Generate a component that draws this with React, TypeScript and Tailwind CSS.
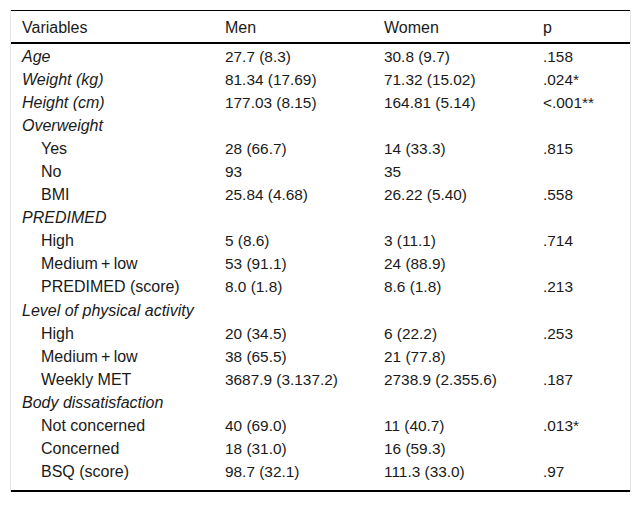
import React from 'react';

type Row = {
  label: string;
  men?: string;
  women?: string;
  p?: string;
  kind: 'var' | 'group' | 'sub';
};

const rows: Row[] = [
  { label: 'Age', men: '27.7 (8.3)', women: '30.8 (9.7)', p: '.158', kind: 'var' },
  { label: 'Weight (kg)', men: '81.34 (17.69)', women: '71.32 (15.02)', p: '.024*', kind: 'var' },
  { label: 'Height (cm)', men: '177.03 (8.15)', women: '164.81 (5.14)', p: '<.001**', kind: 'var' },
  { label: 'Overweight', kind: 'group' },
  { label: 'Yes', men: '28 (66.7)', women: '14 (33.3)', p: '.815', kind: 'sub' },
  { label: 'No', men: '93', women: '35', kind: 'sub' },
  { label: 'BMI', men: '25.84 (4.68)', women: '26.22 (5.40)', p: '.558', kind: 'sub' },
  { label: 'PREDIMED', kind: 'group' },
  { label: 'High', men: '5 (8.6)', women: '3 (11.1)', p: '.714', kind: 'sub' },
  { label: 'Medium\u2009+\u2009low', men: '53 (91.1)', women: '24 (88.9)', kind: 'sub' },
  { label: 'PREDIMED (score)', men: '8.0 (1.8)', women: '8.6 (1.8)', p: '.213', kind: 'sub' },
  { label: 'Level of physical activity', kind: 'group' },
  { label: 'High', men: '20 (34.5)', women: '6 (22.2)', p: '.253', kind: 'sub' },
  { label: 'Medium\u2009+\u2009low', men: '38 (65.5)', women: '21 (77.8)', kind: 'sub' },
  { label: 'Weekly MET', men: '3687.9 (3.137.2)', women: '2738.9 (2.355.6)', p: '.187', kind: 'sub' },
  { label: 'Body dissatisfaction', kind: 'group' },
  { label: 'Not concerned', men: '40 (69.0)', women: '11 (40.7)', p: '.013*', kind: 'sub' },
  { label: 'Concerned', men: '18 (31.0)', women: '16 (59.3)', kind: 'sub' },
  { label: 'BSQ (score)', men: '98.7 (32.1)', women: '111.3 (33.0)', p: '.97', kind: 'sub' },
];

const cols = 'grid grid-cols-[203px_159px_159px_1fr]';
const num = 'pl-[11px] whitespace-nowrap text-[15.4px]';

export default function App() {
  return (
    <div className="bg-white w-[641px] h-[505px] pt-[10px] px-[10px] font-['Liberation_Sans',Arial,sans-serif] text-[16px] text-[#1a1a1a]">
      <div className="border-x border-[#e6e6e6]">
        <div className="border-t border-black">
          <div className={`${cols} h-[33px] leading-[33px] border-b-2 border-black`}>
            <div className="pl-[11px]">Variables</div>
            <div className="pl-[11px]">Men</div>
            <div className="pl-[11px]">Women</div>
            <div className="pl-[11px]">p</div>
          </div>
          <div className="pt-[1px] pb-[7px] border-b-2 border-black">
            {rows.map((r, i) => (
              <div key={i} className={`${cols} h-[23.06px] leading-[23px]`}>
                <div className={r.kind === 'sub' ? 'pl-[30px] whitespace-nowrap' : 'pl-[11px] italic whitespace-nowrap'}>{r.label}</div>
                <div className={num}>{r.men}</div>
                <div className={num}>{r.women}</div>
                <div className={num}>{r.p}</div>
              </div>
            ))}
          </div>
        </div>
      </div>
    </div>
  );
}
